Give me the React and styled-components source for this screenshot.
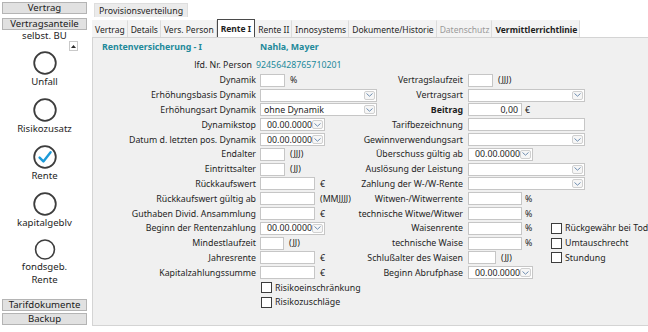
import React from "react";
import styled, { createGlobalStyle } from "styled-components";

const FONT = `"Noto Sans", "Open Sans", "DejaVu Sans", sans-serif`;
const FS = "8.8px";
const TEAL = "#22899a";

const GlobalStyle = createGlobalStyle`
  html, body { margin: 0; padding: 0; background: #fff; }
  body { font-family: ${FONT}; font-size: ${FS}; color: #1e1e1e; }
  * { box-sizing: border-box; }
`;

const Screen = styled.div`
  width: 648px;
  height: 332px;
  display: flex;
  overflow: hidden;
  background: #fff;
`;

/* ---------- Sidebar ---------- */
const Sidebar = styled.aside`
  width: 92px;
  flex: none;
  display: flex;
  flex-direction: column;
  padding: 2px 5px 7px 2px;
`;

const SideButton = styled.div`
  height: 12px;
  margin-bottom: ${(p) => p.$mb || 0}px;
  background: #e1e1e1;
  border: 1px solid #b4b4b4;
  display: flex;
  align-items: center;
  justify-content: center;
  font-size: 9.6px;
  line-height: 10px;
  color: #1a1a1a;
  overflow: hidden;
`;

const SideCaption = styled.div`
  height: 10px;
  margin-top: 1px;
  line-height: 10px;
  text-align: center;
  font-size: 9.6px;
`;

const ScrollUp = styled.div`
  align-self: flex-end;
  margin-right: 9px;
  width: 9px;
  height: 10px;
  background: #fff;
  border: 1px solid #c9c9c9;
  display: flex;
  align-items: center;
  justify-content: center;
`;

const OptionList = styled.div`
  display: flex;
  flex-direction: column;
`;

const Option = styled.div`
  height: 47px;
  display: flex;
  flex-direction: column;
  align-items: center;
`;

const OptionLabel = styled.div`
  font-size: 9.6px;
  line-height: 13px;
  text-align: center;
  color: #1e1e1e;
`;

const BottomButtons = styled.div`
  margin-top: auto;
  display: flex;
  flex-direction: column;
  gap: 2px;
`;

/* ---------- Main ---------- */
const Main = styled.main`
  flex: 1;
  display: flex;
  flex-direction: column;
  padding: 3px 5px 6px 0;
`;

const TopTab = styled.div`
  align-self: flex-start;
  margin-left: 2px;
  height: 14px;
  padding: 0 4px;
  background: #ebebeb;
  border: 1px solid #dedede;
  border-bottom: none;
  display: flex;
  align-items: center;
  font-size: 8.8px;
`;

const TabRow = styled.div`
  margin-top: 2px;
  height: 18px;
  display: flex;
  align-items: flex-end;
`;

const Tab = styled.div`
  height: ${(p) => (p.$active ? 18 : 17)}px;
  padding: 0 ${(p) => (p.$active ? 3 : 2)}px;
  display: flex;
  align-items: center;
  font-size: 8.5px;
  font-weight: ${(p) => (p.$bold || p.$active ? 700 : 400)};
  color: ${(p) => (p.$disabled ? "#9a9a9a" : "#1e1e1e")};
  background: ${(p) => (p.$active ? "#fff" : "#f3f3f3")};
  border: 1px solid ${(p) => (p.$active ? "#4a4a4a" : "#f3f3f3")};
  border-right: 1px solid ${(p) => (p.$active ? "#4a4a4a" : "#dcdcdc")};
  border-bottom: none;
  white-space: nowrap;
`;

const Panel = styled.section`
  flex: 1;
  background: #f0f0f0;
  border: 1px solid #d4d4d4;
`;

const Form = styled.div`
  display: grid;
  grid-template-columns: 167px 117px 91px 83px 1fr;
  grid-template-rows: 18px 17px repeat(16, 14.8px);
  align-items: center;
`;

const Heading = styled.div`
  grid-column: ${(p) => p.$col};
  padding-left: ${(p) => p.$pl || 0}px;
  font-weight: 700;
  color: ${TEAL};
  white-space: nowrap;
`;

const Label = styled.div`
  grid-column: ${(p) => p.$col};
  display: flex;
  justify-content: flex-end;
  padding-right: ${(p) => p.$pr ?? 4}px;
  white-space: nowrap;
  font-weight: ${(p) => (p.$bold ? 700 : 400)};
`;

const Value = styled.div`
  grid-column: ${(p) => p.$col};
  margin-left: -4px;
  color: ${TEAL};
  white-space: nowrap;
`;

const Field = styled.div`
  grid-column: ${(p) => p.$col} / span ${(p) => p.$span || 1};
  display: flex;
  align-items: center;
  white-space: nowrap;
`;

const TextBox = styled.div`
  width: ${(p) => p.$w}px;
  height: 13px;
  background: #fff;
  border: 1px solid #c6c6c6;
  display: flex;
  align-items: center;
  justify-content: ${(p) => (p.$right ? "flex-end" : "flex-start")};
  padding: 0 3px;
`;

const Unit = styled.span`
  margin-left: ${(p) => p.$ml ?? 5}px;
`;

const DropBox = styled.div`
  width: ${(p) => p.$w}px;
  height: 13px;
  background: #fff;
  border: 1px solid #c6c6c6;
  display: flex;
  align-items: center;
  justify-content: space-between;
  padding-left: ${(p) => p.$pl ?? 3}px;
  padding-right: 1px;
`;

const DropButton = styled.span`
  width: 11px;
  height: 9px;
  background: #f6f6f6;
  border: 1px solid #d0d0d0;
  border-radius: 2px;
  display: flex;
  align-items: center;
  justify-content: center;
`;

const CheckRow = styled.label`
  grid-column: ${(p) => p.$col} / span ${(p) => p.$span || 1};
  display: flex;
  align-items: center;
  white-space: nowrap;
  padding-left: ${(p) => p.$pl || 0}px;
`;

const CheckBox = styled.span`
  width: 11px;
  height: 11px;
  background: #fff;
  border: 1px solid #3c3c3c;
  margin-right: 3px;
  flex: none;
`;

/* ---------- Icons ---------- */
const Chevron = () => (
  <svg width="7" height="4" viewBox="0 0 7 4">
    <path d="M0.5 0.5 L3.5 3.2 L6.5 0.5" fill="none" stroke="#6f8eb0" strokeWidth="1" />
  </svg>
);

const UpArrow = () => (
  <svg width="5" height="3" viewBox="0 0 5 3">
    <path d="M0 3 L2.5 0 L5 3 Z" fill="#2b2b2b" />
  </svg>
);

const Circle = ({ checked }) => (
  <svg width="24" height="24" viewBox="0 0 24 24">
    <circle cx="12" cy="12" r="10.8" fill="#fff" stroke="#3d3d3d" strokeWidth="1.8" />
    {checked && (
      <path
        d="M6.6 12.6 L10.4 16.4 L17.6 7.2"
        fill="none"
        stroke="#1c9ad8"
        strokeWidth="2.4"
        strokeLinecap="round"
        strokeLinejoin="round"
      />
    )}
  </svg>
);

/* ---------- Reusable controls ---------- */
const Select = ({ w = 117, children }) => (
  <DropBox $w={w}>
    <span>{children}</span>
    <DropButton>
      <Chevron />
    </DropButton>
  </DropBox>
);

const DateInput = () => (
  <DropBox $w={65} $pl={6}>
    <span>00.00.0000</span>
    <DropButton>
      <Chevron />
    </DropButton>
  </DropBox>
);

const Input = ({ w, unit, right, value }) => (
  <>
    <TextBox $w={w} $right={right}>
      {value}
    </TextBox>
    {unit && <Unit $ml={right ? 3 : 5}>{unit}</Unit>}
  </>
);

const Row = ({ row, label, bold, col = 1, children, span }) => (
  <>
    <Label $col={col} $bold={bold} style={{ gridRow: row }} $pr={col === 1 ? 4 : 5}>
      {label}
    </Label>
    <Field $col={col + 1} $span={span} style={{ gridRow: row }}>
      {children}
    </Field>
  </>
);

const Check = ({ row, col, span, children, pl }) => (
  <CheckRow $col={col} $span={span} $pl={pl} style={{ gridRow: row }}>
    <CheckBox />
    {children}
  </CheckRow>
);

const options = [
  { label: ["Unfall"] },
  { label: ["Risikozusatz"] },
  { label: ["Rente"], checked: true },
  { label: ["kapitalgeblv"] },
  { label: ["fondsgeb.", "Rente"] },
];

const tabs = [
  { t: "Vertrag" },
  { t: "Details" },
  { t: "Vers. Person" },
  { t: "Rente I", active: true },
  { t: "Rente II" },
  { t: "Innosystems" },
  { t: "Dokumente/Historie" },
  { t: "Datenschutz", disabled: true },
  { t: "Vermittlerrichtlinie", bold: true },
];

export default function App() {
  return (
    <Screen>
      <GlobalStyle />
      <Sidebar>
        <SideButton $mb={4}>Vertrag</SideButton>
        <SideButton>Vertragsanteile</SideButton>
        <SideCaption>selbst. BU</SideCaption>
        <ScrollUp>
          <UpArrow />
        </ScrollUp>
        <OptionList>
          {options.map((o) => (
            <Option key={o.label.join("")}>
              <Circle checked={o.checked} />
              <OptionLabel>
                {o.label.map((l) => (
                  <div key={l}>{l}</div>
                ))}
              </OptionLabel>
            </Option>
          ))}
        </OptionList>
        <BottomButtons>
          <SideButton>Tarifdokumente</SideButton>
          <SideButton>Backup</SideButton>
        </BottomButtons>
      </Sidebar>

      <Main>
        <TopTab>Provisionsverteilung</TopTab>
        <TabRow>
          {tabs.map((t) => (
            <Tab key={t.t} $active={t.active} $disabled={t.disabled} $bold={t.bold}>
              {t.t}
            </Tab>
          ))}
        </TabRow>
        <Panel>
          <Form>
            <Heading $col={1} $pl={9} style={{ gridRow: 1 }}>
              Rentenversicherung - I
            </Heading>
            <Heading $col={2} style={{ gridRow: 1 }}>
              Nahla, Mayer
            </Heading>

            <Label $col={1} $pr={8} style={{ gridRow: 2 }}>
              lfd. Nr. Person
            </Label>
            <Value $col={2} style={{ gridRow: 2 }}>
              92456428765710201
            </Value>

            {/* left column */}
            <Row row={3} label="Dynamik">
              <Input w={25} unit="%" />
            </Row>
            <Row row={4} label="Erhöhungsbasis Dynamik">
              <Select />
            </Row>
            <Row row={5} label="Erhöhungsart Dynamik">
              <Select>ohne Dynamik</Select>
            </Row>
            <Row row={6} label="Dynamikstop">
              <DateInput />
            </Row>
            <Row row={7} label="Datum d. letzten pos. Dynamik">
              <DateInput />
            </Row>
            <Row row={8} label="Endalter">
              <Input w={25} unit="(JJJ)" />
            </Row>
            <Row row={9} label="Eintrittsalter">
              <Input w={25} unit="(JJ)" />
            </Row>
            <Row row={10} label="Rückkaufswert">
              <Input w={55} unit="€" />
            </Row>
            <Row row={11} label="Rückkaufswert gültig ab">
              <Input w={55} unit="(MMJJJJ)" />
            </Row>
            <Row row={12} label="Guthaben Divid. Ansammlung">
              <Input w={55} unit="€" />
            </Row>
            <Row row={13} label="Beginn der Rentenzahlung">
              <DateInput />
            </Row>
            <Row row={14} label="Mindestlaufzeit">
              <Input w={24} unit="(JJ)" />
            </Row>
            <Row row={15} label="Jahresrente">
              <Input w={55} unit="€" />
            </Row>
            <Row row={16} label="Kapitalzahlungssumme">
              <Input w={55} unit="€" />
            </Row>
            <Check row={17} col={2} span={2} pl={1}>
              Risikoeinschränkung
            </Check>
            <Check row={18} col={2} span={2} pl={1}>
              Risikozuschläge
            </Check>

            {/* right column */}
            <Row row={3} col={3} label="Vertragslaufzeit">
              <Input w={25} unit="(JJJ)" />
            </Row>
            <Row row={4} col={3} span={2} label="Vertragsart">
              <Select />
            </Row>
            <Row row={5} col={3} span={2} label="Beitrag" bold>
              <Input w={54} right value="0,00" unit="€" />
            </Row>
            <Row row={6} col={3} span={2} label="Tarifbezeichnung">
              <TextBox $w={117} />
            </Row>
            <Row row={7} col={3} span={2} label="Gewinnverwendungsart">
              <Select />
            </Row>
            <Row row={8} col={3} label="Überschuss gültig ab">
              <DateInput />
            </Row>
            <Row row={9} col={3} span={2} label="Auslösung der Leistung">
              <Select />
            </Row>
            <Row row={10} col={3} span={2} label="Zahlung der W-/W-Rente">
              <Select />
            </Row>
            <Row row={11} col={3} label="Witwen-/Witwerrente">
              <Input w={54} unit="%" right />
            </Row>
            <Row row={12} col={3} label="technische Witwe/Witwer">
              <Input w={54} unit="%" right />
            </Row>
            <Row row={13} col={3} label="Waisenrente">
              <Input w={54} unit="%" right />
            </Row>
            <Row row={14} col={3} label="technische Waise">
              <Input w={54} unit="%" right />
            </Row>
            <Row row={15} col={3} label="Schlußalter des Waisen">
              <Input w={28} unit="(JJ)" />
            </Row>
            <Row row={16} col={3} label="Beginn Abrufphase">
              <DateInput />
            </Row>

            <Check row={13} col={5}>
              Rückgewähr bei Tod
            </Check>
            <Check row={14} col={5}>
              Umtauschrecht
            </Check>
            <Check row={15} col={5}>
              Stundung
            </Check>
          </Form>
        </Panel>
      </Main>
    </Screen>
  );
}
